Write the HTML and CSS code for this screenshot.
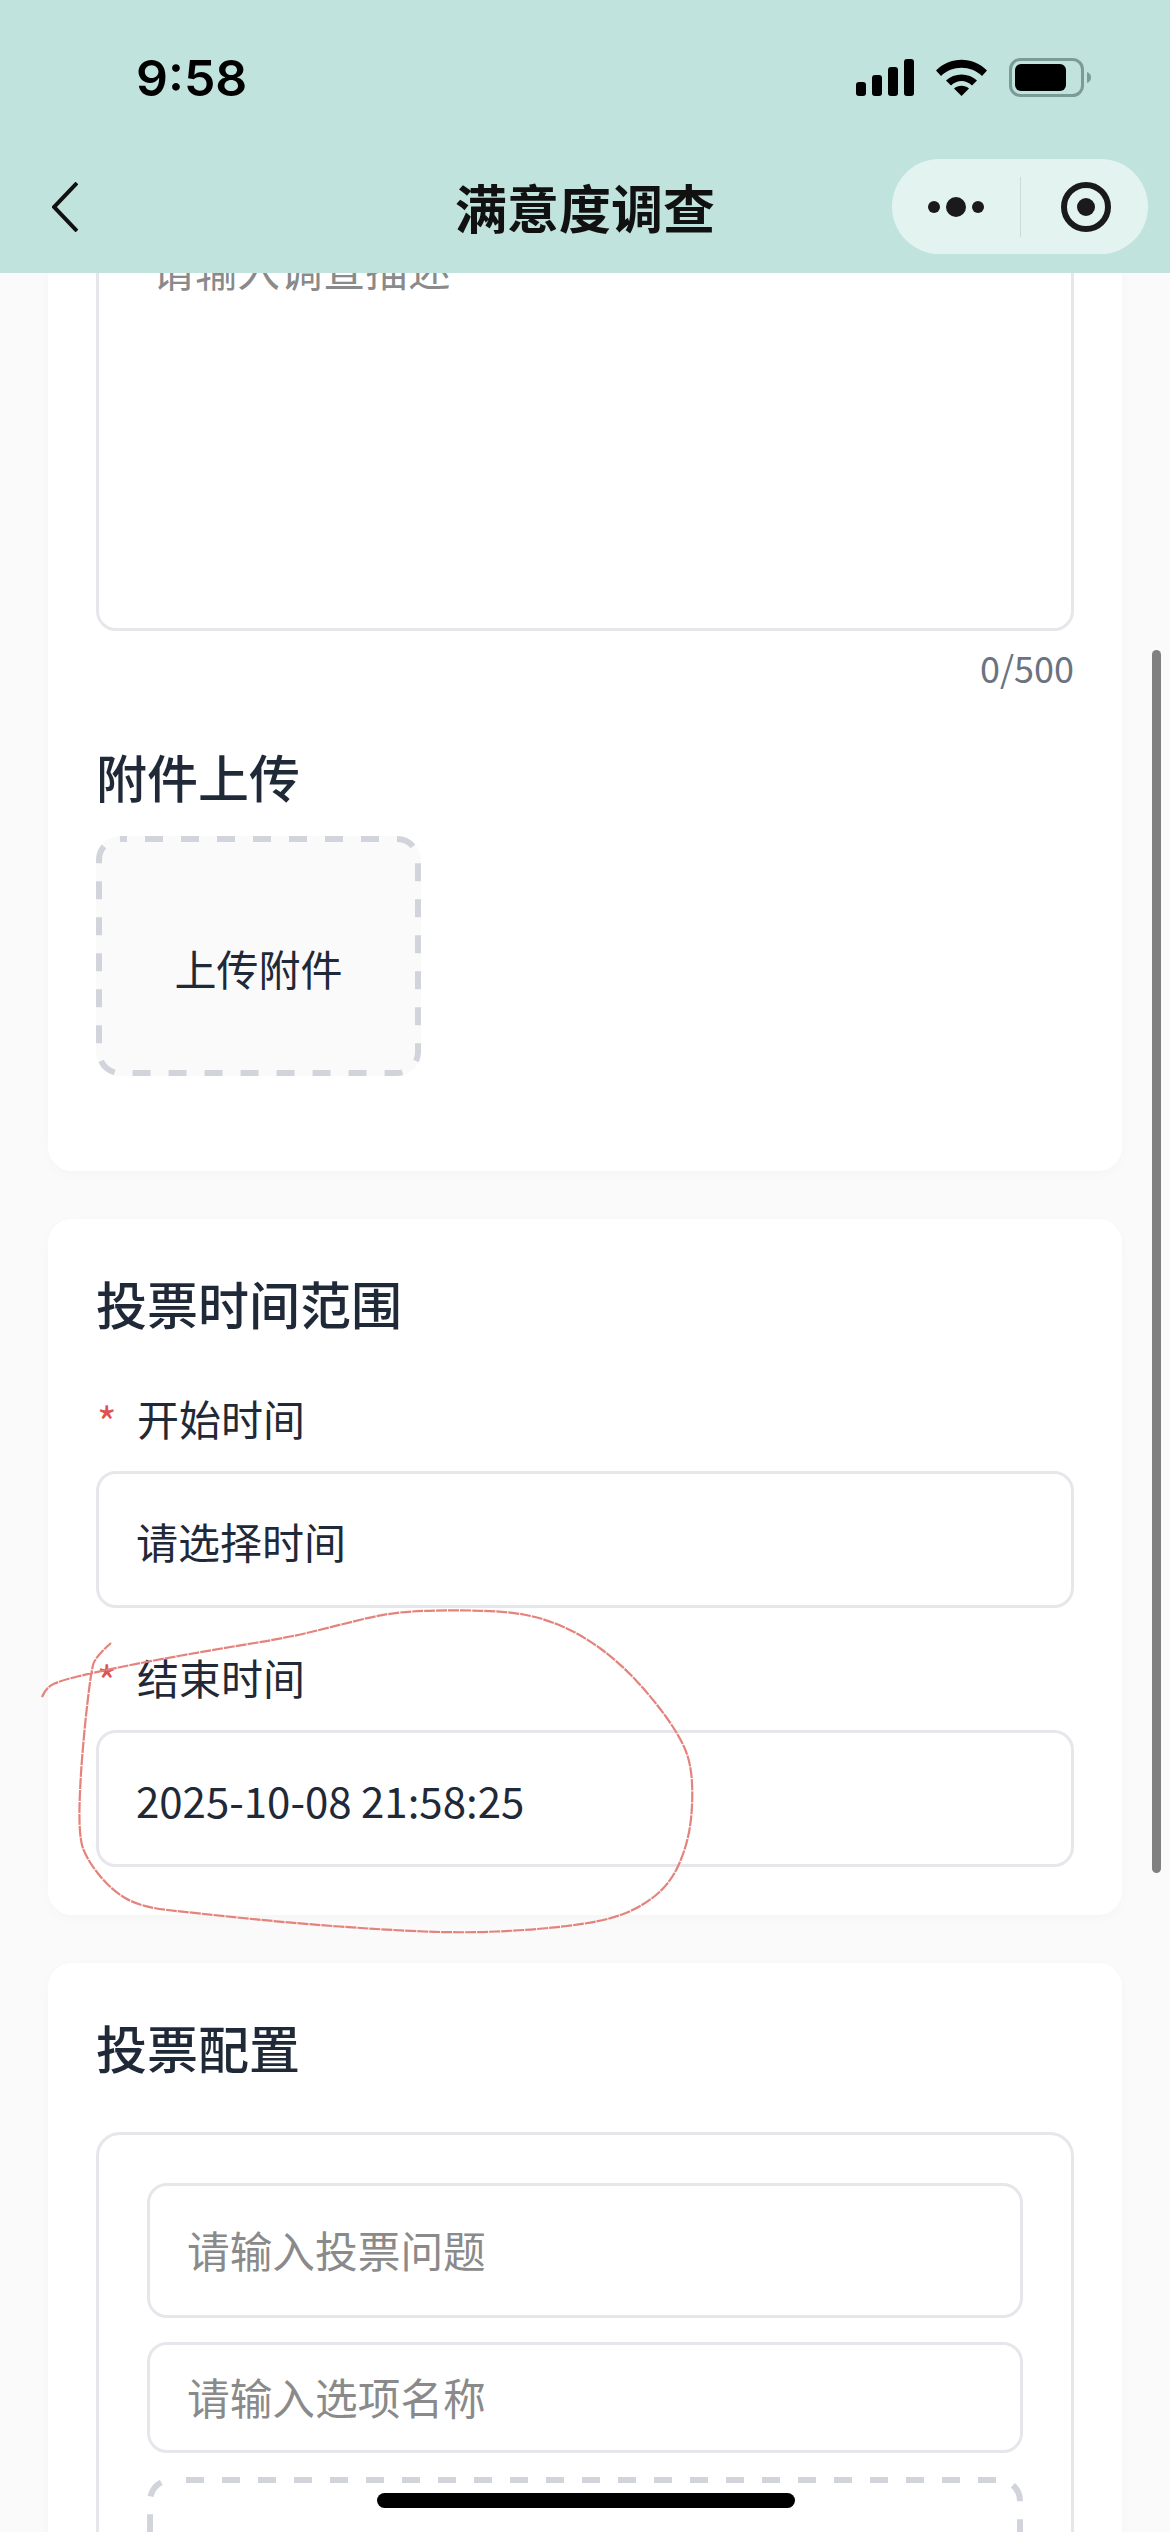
FILE: index.html
```html
<!DOCTYPE html>
<html>
  <head>
    <meta charset="utf-8">
    <title>满意度调查</title>
    <link rel="stylesheet" href="styles.css">
  </head>
  <body>
    <div class="top">
      <div class="status">
        <span class="time">9:58</span>
        <div class="status-icons">
          <svg class="signal" width="58" height="37" viewBox="0 0 58 37">
            <rect x="0" y="23" width="10" height="14" rx="3"/>
            <rect x="16" y="16" width="10" height="21" rx="3"/>
            <rect x="32" y="8" width="10" height="29" rx="3"/>
            <rect x="48" y="0" width="10" height="37" rx="3"/>
          </svg>
          <svg class="wifi" width="51" height="37" viewBox="0 0 51 37">
            <path d="M0 11.5C14-3 37-3 51 11.5L46 17C35 6 16 6 5 17Z"/>
            <path d="M10 21.500C18 13.500 33 13.500 41 21.500L36 26.500C30 20.500 21 20.500 15 26.500Z"/>
            <path d="M25.500 37L18 29.500C22 25.800 29 25.800 33 29.500Z"/>
          </svg>
          <svg class="battery" width="82" height="39" viewBox="0 0 82 39">
            <rect x="1.500" y="1.500" width="72" height="36" rx="10" fill="none" stroke="#7a9b96" stroke-width="3"/>
            <rect x="6" y="6" width="51" height="27" rx="6"/>
            <path d="M78 14C81 15 82 17 82 19.500C82 22 81 24 78 25Z" fill="#7a9b96"/>
          </svg>
        </div>
      </div>
      <div class="nav">
        <svg class="back" width="26" height="50" viewBox="0 0 26 50">
          <path d="M25 1L2 25L25 49" fill="none" stroke="#111" stroke-width="4"/>
        </svg>
        <span class="nav-title">满意度调查</span>
        <div class="capsule">
          <svg class="capsule-more" width="56" height="20" viewBox="0 0 56 20">
            <circle cx="6" cy="10" r="6"/>
            <circle cx="28" cy="10" r="10"/>
            <circle cx="50" cy="10" r="6"/>
          </svg>
          <span class="capsule-line"></span>
          <svg class="capsule-target" width="50" height="50" viewBox="0 0 50 50">
            <circle cx="25" cy="25" r="22" fill="none" stroke="#1a1a1a" stroke-width="6"/>
            <circle cx="25" cy="25" r="9"/>
          </svg>
        </div>
      </div>
    </div>

    <div class="body-wrap">
      <div class="scroll">
        <div class="card">
          <div class="textarea">请输入调查描述</div>
          <div class="counter">0/500</div>
          <div class="sub-title">附件上传</div>
          <div class="upload">
            <svg class="dash"><rect x="3" y="3" rx="21"/></svg>
            上传附件
          </div>
        </div>

        <div class="card">
          <div class="card-title">投票时间范围</div>
          <div class="label"><span class="star">*</span>开始时间</div>
          <div class="input">请选择时间</div>
          <div class="label"><span class="star">*</span>结束时间</div>
          <div class="input">2025-10-08 21:58:25</div>
        </div>

        <div class="card">
          <div class="card-title">投票配置</div>
          <div class="vote-box">
            <div class="input vote-question holder">请输入投票问题</div>
            <div class="input vote-option holder">请输入选项名称</div>
            <div class="add-option">
              <svg class="dash"><rect x="3" y="3" rx="21"/></svg>
              点击上传选项图片
            </div>
          </div>
        </div>
      </div>
      <div class="scrollbar"></div>
    </div>

    <svg class="scribble" width="1170" height="2532" viewBox="0 0 1170 2532">
      <path d="M42 1697Q46 1687 54.500 1683.500Q63 1680 77.500 1676.500Q92 1673 118.500 1667.500Q145 1662 181.500 1655.500Q218 1649 254.500 1643Q291 1637 315 1631Q339 1625 363.500 1619Q388 1613 412 1611.500Q436 1610 470 1610.500Q504 1611 523.500 1614.500Q543 1618 562.500 1626.500Q582 1635 601 1649Q620 1663 637 1681.500Q654 1700 666.500 1717.500Q679 1735 685 1749Q691 1763 692 1783Q693 1803 690.500 1823Q688 1843 679.500 1863Q671 1883 655.500 1895.500Q640 1908 620.500 1915Q601 1922 567 1926Q533 1930 496.500 1931.500Q460 1933 424 1931.500Q388 1930 339.500 1926.500Q291 1923 242.500 1918Q194 1913 167.500 1910Q141 1907 126 1898.500Q111 1890 98 1873.500Q85 1857 82 1845Q79 1833 79.500 1808Q80 1783 82.500 1753Q85 1723 88 1698Q91 1673 93 1665Q95 1657 111 1643"/>
    </svg>
    <div class="home-bar"></div>
  </body>
</html>
```

FILE: styles.css
```css
*{margin: 0;padding: 0;box-sizing: border-box;}
html,body {height: 100%;}
body {
  width: 1170px;
  height: 2532px;
  overflow: hidden;
  position: relative;
  display: flex;
  flex-direction: column;
  background: #fafafa;
  color: #1f2937;
  font-family: "Noto Sans CJK SC", "Noto Sans", sans-serif;
}

/* status bar + nav */
.top {height: 273px;flex: none;background: #c1e3dd;position: relative;z-index: 2;}
.status {height: 159px;display: flex;justify-content: space-between;padding: 58px 79px 0 136px;}
.time {font: 600 50px/40px Inter, sans-serif;color: #000;}
.status-icons {display: flex;align-items: flex-start;}
.signal {margin: 1px 22px 0 0;}
.wifi {margin: 1px 22px 0 0;}
.nav {height: 95px;display: flex;align-items: center;justify-content: space-between;position: relative;padding: 0 22px 0 52px;}
.nav-title {
  position: absolute;
  left: 0;
  right: 0;
  text-align: center;
  font-size: 52px;
  font-weight: 700;
  line-height: 93px;
  color: #111;
}
.capsule {
  width: 256px;
  height: 95px;
  border-radius: 48px;
  background: #e3f3f0;
  display: flex;
  align-items: center;
  padding-left: 36px;
}
.capsule svg {fill: #1a1a1a;}
.capsule-line {width: 1px;height: 60px;background: #c9dcd8;margin: 0 40px 0 36px;}

/* scrolled content */
.body-wrap {flex: 1;overflow: hidden;position: relative;}
.scroll {margin-top: -125px;padding: 0 48px;}
.card {
  background: #fff;
  border-radius: 24px;
  padding: 48px;
  margin-bottom: 48px;
  box-shadow: 0 3px 12px rgba(0,0,0,.025);
}
.textarea {
  height: 435px;
  border: 3px solid #e5e7eb;
  border-radius: 20px;
  padding: 37px 53px;
  font-size: 42.700px;
  line-height: 64px;
  color: #8a8a8a;
}
.counter {text-align: right;font-size: 36px;line-height: 56px;margin-top: 8px;color: #6b7280;}
.sub-title {font-size: 51px;font-weight: 500;line-height: 76px;margin-top: 43px;}
.upload {
  position: relative;
  width: 325px;
  height: 240px;
  margin: 22px 0 47px;
  padding-top: 22px;
  border-radius: 24px;
  background: #fafafa;
  display: flex;
  align-items: center;
  justify-content: center;
  font-size: 42px;
}
.dash {position: absolute;left: 0;top: 0;width: 100%;height: 100%;}
.dash rect {
  width: calc(100% - 6px);
  height: calc(100% - 6px);
  fill: none;
  stroke: #d1d5db;
  stroke-width: 6;
  stroke-dasharray: 18 18;
  stroke-dashoffset: 11;
}
.card-title {font-size: 51px;font-weight: 500;line-height: 72px;}
.label {display: flex;align-items: center;font-size: 42px;line-height: 58px;margin: 40px 0 24px;}
.card-title + .label {margin-top: 50px;}
.star {width: 41px;padding-left: 1px;margin-top: 6px;line-height: 46px;color: #e05252;}
.input {
  height: 137px;
  border: 3px solid #e5e7eb;
  border-radius: 20px;
  padding-left: 37px;
  font-size: 42px;
  line-height: 133px;
}
.holder {color: #8a8a8a;font-size: 42.700px;}
.vote-box {
  height: 600px;
  margin: 49px 0 0;
  border: 3px solid #e5e7eb;
  border-radius: 24px;
  padding: 48px;
}
.vote-question {height: 135px;line-height: 126px;margin-bottom: 24px;}
.vote-option {height: 111px;line-height: 102px;margin-bottom: 24px;}
.add-option {
  position: relative;
  height: 148px;
  display: flex;
  align-items: center;
  justify-content: center;
  font-size: 42px;
  color: #6b7280;
}
.add-option .dash rect {stroke-dashoffset: 21;}
.scrollbar {
  position: absolute;
  right: 9px;
  top: 377px;
  width: 9px;
  height: 1223px;
  border-radius: 5px;
  background: #808080;
}

/* pen mark on the screenshot */
.scribble {position: absolute;left: 0;top: 0;z-index: 3;pointer-events: none;}
.scribble path {fill: none;stroke: #e4837c;stroke-width: 2.200;stroke-dasharray: 11 1;}

.home-bar {
  position: absolute;
  left: 377px;
  top: 2493px;
  z-index: 4;
  width: 418px;
  height: 15px;
  border-radius: 8px;
  background: #000;
}
```
